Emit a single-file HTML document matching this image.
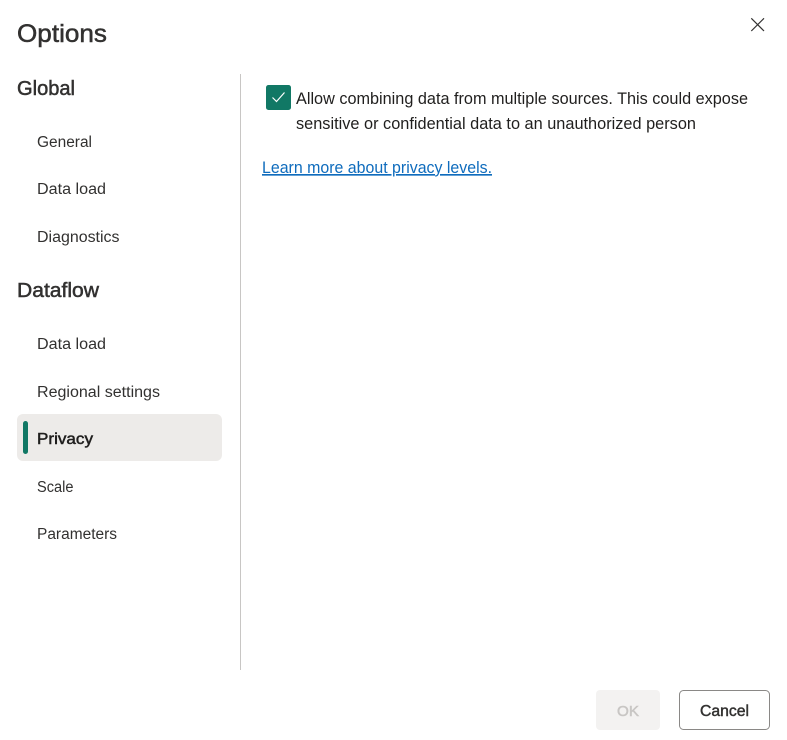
<!DOCTYPE html>
<html lang="en">
<head>
<meta charset="utf-8">
<title>Options</title>
<style>
html,body{margin:0;padding:0;background:#fff;width:787px;height:740px;overflow:hidden}
svg{display:block;position:absolute;left:0;top:0}
text{font-family:"Liberation Sans",sans-serif;white-space:pre}
.nav{font-size:15.5px;fill:#323130}
.h{fill:#323130;stroke:#323130;stroke-width:.5px}
.body{font-size:16.5px;fill:#201f1e}
</style>
</head>
<body>
<svg width="787" height="740" viewBox="0 0 787 740" xmlns="http://www.w3.org/2000/svg">
<rect width="787" height="740" fill="#fff"/>
<text class="h" x="17" y="42" font-size="25" textLength="90" lengthAdjust="spacingAndGlyphs">Options</text>
<path d="M751.3 18.3L764 31M764 18.3L751.3 31" stroke="#323130" stroke-width="1.2" fill="none"/>

<text class="h" x="17" y="95" font-size="20" textLength="58" lengthAdjust="spacingAndGlyphs">Global</text>
<text class="nav" x="37" y="147" textLength="55" lengthAdjust="spacingAndGlyphs">General</text>
<text class="nav" x="37" y="194" textLength="69" lengthAdjust="spacingAndGlyphs">Data load</text>
<text class="nav" x="37" y="242" textLength="82.5" lengthAdjust="spacingAndGlyphs">Diagnostics</text>

<text class="h" x="17" y="297" font-size="20" textLength="82" lengthAdjust="spacingAndGlyphs">Dataflow</text>
<text class="nav" x="37" y="349" textLength="69" lengthAdjust="spacingAndGlyphs">Data load</text>
<text class="nav" x="37" y="397" textLength="123" lengthAdjust="spacingAndGlyphs">Regional settings</text>

<rect x="17" y="414" width="205" height="47" rx="6" fill="#edebe9"/>
<rect x="23" y="421" width="5" height="33" rx="2.5" fill="#117865"/>
<text x="37" y="444" font-size="16" fill="#201f1e" stroke="#201f1e" stroke-width=".5" textLength="56" lengthAdjust="spacingAndGlyphs">Privacy</text>
<text class="nav" x="37" y="492" textLength="36.5" lengthAdjust="spacingAndGlyphs">Scale</text>
<text class="nav" x="37" y="539" textLength="80" lengthAdjust="spacingAndGlyphs">Parameters</text>

<rect x="240" y="74" width="1" height="596" fill="#c8c6c4"/>

<rect x="266" y="85" width="25" height="25" rx="2.5" fill="#117865"/>
<path d="M272.5 97.5L276.5 101.5L284.5 92.5" stroke="#fff" stroke-width="1.2" fill="none"/>
<text class="body" x="296" y="104" textLength="452" lengthAdjust="spacingAndGlyphs">Allow combining data from multiple sources. This could expose</text>
<text class="body" x="296" y="129" textLength="400" lengthAdjust="spacingAndGlyphs">sensitive or confidential data to an unauthorized person</text>
<text x="262" y="173" font-size="16.5" fill="#0f6cbd" text-decoration="underline" textLength="230" lengthAdjust="spacingAndGlyphs">Learn more about privacy levels.</text>

<rect x="596" y="690" width="64" height="40" rx="4" fill="#f3f2f1"/>
<text x="617" y="716" font-size="15" fill="#c8c6c4" stroke="#c8c6c4" stroke-width=".5" textLength="22" lengthAdjust="spacingAndGlyphs">OK</text>
<rect x="679.5" y="690.5" width="90" height="39" rx="4" fill="#fff" stroke="#8a8886" stroke-width="1"/>
<text x="700" y="716" font-size="15.5" fill="#323130" stroke="#323130" stroke-width=".45" textLength="49" lengthAdjust="spacingAndGlyphs">Cancel</text>
</svg>
</body>
</html>
